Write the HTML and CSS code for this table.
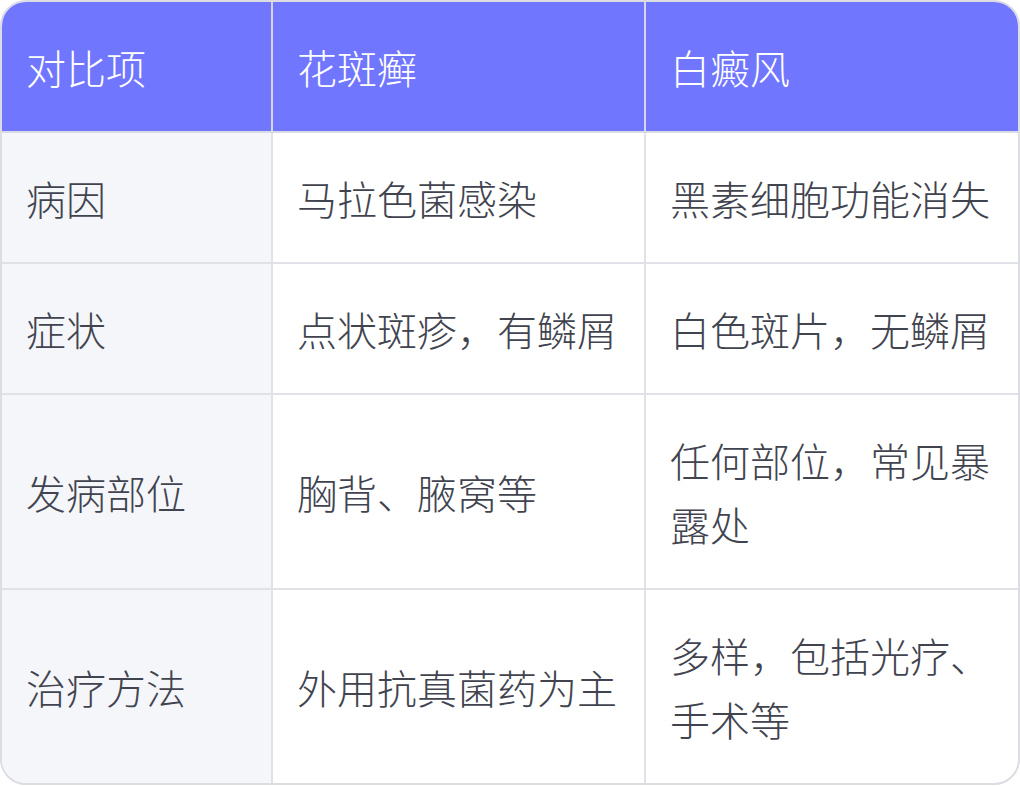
FILE: index.html
```html
<!DOCTYPE html>
<html lang="zh-CN">
<head>
<meta charset="utf-8">
<link rel="stylesheet" href="styles.css">
</head>
<body>
<div class="card">
  <table class="compare">
    <colgroup>
      <col class="c1"><col class="c2"><col class="c3">
    </colgroup>
    <thead>
      <tr><th>对比项</th><th>花斑癣</th><th>白癜风</th></tr>
    </thead>
    <tbody>
      <tr><td class="label">病因</td><td>马拉色菌感染</td><td>黑素细胞功能消失</td></tr>
      <tr><td class="label">症状</td><td>点状斑疹，有鳞屑</td><td>白色斑片，无鳞屑</td></tr>
      <tr><td class="label">发病部位</td><td>胸背、腋窝等</td><td>任何部位，常见暴露处</td></tr>
      <tr><td class="label">治疗方法</td><td>外用抗真菌药为主</td><td>多样，包括光疗、手术等</td></tr>
    </tbody>
  </table>
</div>
</body>
</html>
```
FILE: styles.css
```css
html, body {
  margin: 0;
  padding: 0;
  background: #ffffff;
}
.card {
  width: 1020px;
  box-sizing: border-box;
  border: 2px solid #dcdde2;
  border-radius: 26px;
  overflow: hidden;
  background: #ffffff;
}
.compare {
  width: 100%;
  border-collapse: collapse;
  table-layout: fixed;
  font-family: "Noto Sans CJK SC", "Noto Sans", sans-serif;
  font-size: 40px;
  line-height: 64px;
  color: #41444f;
}
.c1 { width: 270px; }
.c2 { width: 373px; }
.c3 { width: 373px; }
.compare th,
.compare td {
  padding: 32.5px 25px 32.5px 24px;
  text-align: left;
  vertical-align: middle;
  border: 2px solid #e1e2e7;
  font-weight: 300;
}
.compare tr > :first-child { border-left: none; }
.compare tr > :last-child { border-right: none; }
.compare thead th {
  border-top: none;
  background: #7176ff;
  color: #ffffff;
  border-left-color: #d6d7e6;
  border-right-color: #d6d7e6;
  border-bottom-color: #d9dae3;
}
.compare tbody tr:last-child td { border-bottom: none; }
.compare td.label {
  background: #f5f6fa;
}
```
